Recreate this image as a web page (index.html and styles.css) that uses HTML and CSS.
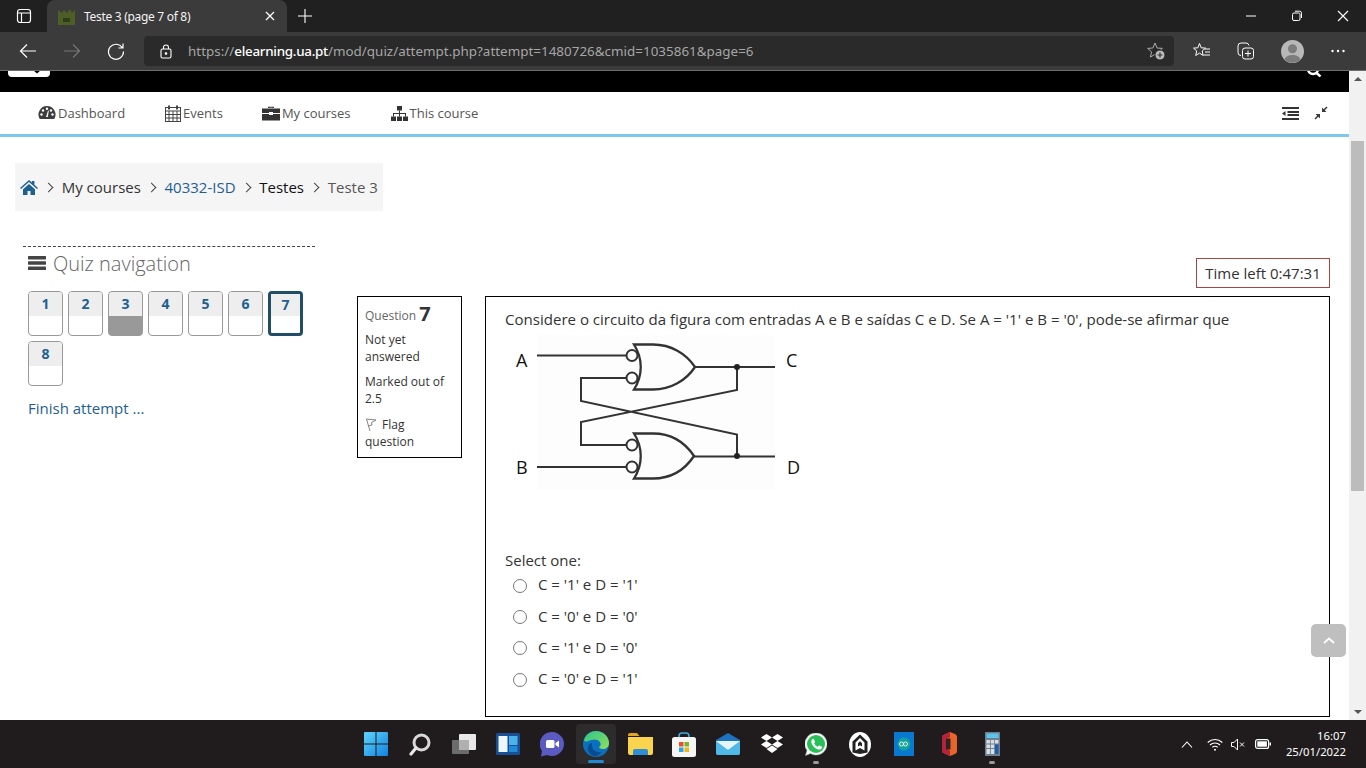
FILE: index.html
```html
<!DOCTYPE html>
<html lang="en">
<head>
<meta charset="utf-8">
<title>Teste 3 (page 7 of 8)</title>
<link rel="stylesheet" href="styles.css">
</head>
<body>
<div class="screen">
  <div class="tabbar">
    <svg class="tab-toggle" width="16" height="16" viewBox="0 0 16 16" fill="none" stroke="#fff" stroke-width="1.2"><rect x="1.5" y="1.5" width="13" height="13" rx="2.5"/><path d="M1.5 5h13M5.5 5v9.5"/></svg>
    <div class="tab">
      <svg class="favicon" width="17" height="17" viewBox="0 0 17 17"><path d="M0 2l4 3 2-3 3 3 3-4 2 4 3-3v15H0z" fill="#4d5f26"/><rect x="5" y="10" width="7" height="4" fill="#2f3c18"/></svg>
      <span class="tab-title">Teste 3 (page 7 of 8)</span>
      <svg class="tab-close" width="10" height="10" viewBox="0 0 10 10" stroke="#fff" stroke-width="1.3"><path d="M1 1l8 8M9 1l-8 8"/></svg>
    </div>
    <svg class="new-tab" width="16" height="16" viewBox="0 0 16 16" stroke="#fff" stroke-width="1.1"><path d="M8 1v14M1 8h14"/></svg>
    <div class="win-controls">
      <svg width="12" height="12" viewBox="0 0 12 12" stroke="#fff"><path d="M1 6h10"/></svg>
      <svg width="12" height="12" viewBox="0 0 12 12" stroke="#fff" fill="none"><rect x="1.5" y="3" width="7.5" height="7.5" rx="1.5"/><path d="M4 1.2h4.5a2 2 0 0 1 2 2V8"/></svg>
      <svg width="12" height="12" viewBox="0 0 12 12" stroke="#fff" stroke-width="1.1"><path d="M1 1l10 10M11 1L1 11"/></svg>
    </div>
  </div>

  <div class="toolbar">
    <svg class="tool tool-back" width="18" height="16" viewBox="0 0 18 16" fill="none" stroke="#fff" stroke-width="1.2"><path d="M17 8H1.5M8 1.5L1.5 8 8 14.5"/></svg>
    <svg class="tool tool-fwd" width="18" height="16" viewBox="0 0 18 16" fill="none" stroke="#777" stroke-width="1.2"><path d="M1 8h15.5M10 1.5L16.5 8 10 14.5"/></svg>
    <svg class="tool tool-reload" width="18" height="18" viewBox="0 0 18 18" fill="none" stroke="#fff" stroke-width="1.2"><path d="M15.5 6A7.5 7.5 0 1 0 16.5 9.5M16 1.5V6h-4.5"/></svg>
    <div class="urlbox">
      <svg class="lock" width="12" height="15" viewBox="0 0 12 15" fill="none" stroke="#fff" stroke-width="1.1"><rect x="1" y="5" width="10" height="9" rx="1.5"/><path d="M3.5 5V3.500a2.500 2.500 0 0 1 5 0V5"/><circle cx="6" cy="9.500" r=".8" fill="#fff"/></svg>
      <span class="url">https://<b>elearning.ua.pt</b>/mod/quiz/attempt.php?attempt=1480726&amp;cmid=1035861&amp;page=6</span>
      <svg class="star-add" width="18" height="18" viewBox="0 0 18 18" fill="none"><path d="M8 1l2.100 5 5.300.4-4 3.500 1.200 5.200L8 12.300l-4.600 2.800 1.200-5.200-4-3.500L5.900 6z" stroke="#aaa" stroke-width="1"/><circle cx="13" cy="13" r="5" fill="#bbb" stroke="#2a2a2a" stroke-width="1"/><path d="M13 10.500v5M10.500 13h5" stroke="#333" stroke-width="1.2"/></svg>
    </div>
    <svg class="tool tool-fav" width="18" height="18" viewBox="0 0 18 18" fill="none" stroke="#fff" stroke-width="1"><path d="M6.500 1.500l1.700 4.300 4.300.3-3.300 2.900 1 4.500-3.700-2.400-3.800 2.400 1-4.500L.5 6.100l4.300-.3z"/><path d="M12 7h5M12 10h5M10.500 13h6.500"/></svg>
    <svg class="tool tool-coll" width="18" height="18" viewBox="0 0 18 18" fill="none" stroke="#fff" stroke-width="1"><path d="M4 13.500A3 3 0 0 1 1 10.500V4a3 3 0 0 1 3-3h5a3 3 0 0 1 3 2.500"/><rect x="5.500" y="6" width="11" height="11" rx="2.500"/><path d="M11 8.500v6M8 11.500h6"/></svg>
    <svg class="tool tool-avatar" width="23" height="23" viewBox="0 0 23 23"><circle cx="11.500" cy="11.500" r="11.500" fill="#b8b8b8"/><circle cx="11.500" cy="8.800" r="4.500" fill="#7c7c7c"/><path d="M3.500 19.500c1.500-3.500 4.500-4.500 8-4.500s6.500 1 8 4.500a11.500 11.500 0 0 1-16 0z" fill="#7c7c7c"/></svg>
    <svg class="tool tool-more" width="14" height="4" viewBox="0 0 14 4" fill="#fff"><circle cx="1.500" cy="2" r="1.200"/><circle cx="7" cy="2" r="1.200"/><circle cx="12.500" cy="2" r="1.200"/></svg>
  </div>

  <div class="viewport">
    <div class="page">
      <header class="site-head">
        <svg class="site-logo" width="42" height="7" viewBox="0 0 42 7"><path d="M0 0h25l4 3.500L33 0h9v3a4 4 0 0 1-4 4H4a4 4 0 0 1-4-4z" fill="#fff"/></svg>
        <span class="site-name">de aveiro</span>
        <svg class="site-search" width="16" height="7" viewBox="0 0 16 7" fill="none" stroke="#fff" stroke-width="2.400"><circle cx="6" cy="-1" r="5"/><path d="M9.500 3l4 3.500"/></svg>
      </header>

      <nav class="nav">
        <a class="nav-item nav-dash"><svg width="18" height="16" viewBox="0 0 18 16" fill="#3d3d3d"><path d="M9 1a8.500 8.500 0 0 0-7.200 13h14.400A8.500 8.500 0 0 0 9 1z"/><g fill="#fff"><circle cx="5" cy="5.500" r="1.200"/><circle cx="9" cy="3.800" r="1.200"/><circle cx="13" cy="5.500" r="1.200"/><circle cx="3.500" cy="9.500" r="1.200"/><circle cx="14.500" cy="9.500" r="1.200"/><path d="M8 12l2-6.500.8.300-1 6.200z"/></g></svg>Dashboard</a>
        <a class="nav-item nav-events"><svg width="16" height="17" viewBox="0 0 16 17" fill="none" stroke="#444" stroke-width="1"><rect x=".5" y="2.500" width="15" height="14"/><path d="M.5 6h15M.5 9.500h15M.5 13h15M4 6v10.500M8 6v10.500M12 6v10.500"/><path d="M4 .5v4M12 .5v4" stroke-width="2"/></svg>Events</a>
        <a class="nav-item nav-courses"><svg width="18" height="15" viewBox="0 0 18 15" fill="#333"><path d="M6 2V.8h6V2h-1.300v-.2H7.300V2zM0 2.500h18V7h-7V6H7v1H0zM0 8h7v1h4V8h7v6.500H0z"/></svg>My courses</a>
        <a class="nav-item nav-this"><svg width="17" height="15" viewBox="0 0 17 15" fill="#333"><rect x="6" y="0" width="5" height="4.500"/><rect x="0" y="10.500" width="5" height="4.500"/><rect x="6" y="10.500" width="5" height="4.500"/><rect x="12" y="10.500" width="5" height="4.500"/><path d="M8 4.500h1v2.500h6v3.500h-1V8H9v2.500H8V8H3v2.500H2V7h6z"/></svg>This course</a>
        <span class="nav-spacer"></span>
        <svg class="nav-indent" width="17" height="13" viewBox="0 0 17 13" fill="#333"><rect width="17" height="2"/><rect x="5.500" y="4" width="11.500" height="2"/><rect x="5.500" y="7" width="11.500" height="2"/><rect y="11" width="17" height="2"/><path d="M3.500 4v5L0 6.500z"/></svg>
        <svg class="nav-shrink" width="14" height="14" viewBox="0 0 14 14" fill="#3a3a3a"><path d="M8 6V1.500l1.700 1.700L12.500.5l1 1-2.700 2.800L12.500 6zM6 8v4.500l-1.700-1.700L1.500 13.500l-1-1 2.700-2.800L1.500 8z"/></svg>
      </nav>

      <div class="content">
        <ol class="crumbs">
          <li class="crumb"><svg class="crumb-home" width="18" height="15" viewBox="0 0 18 15" fill="#1f6092"><path d="M9 0l3 2.600V1h2.400v3.700L18 8l-1 1-8-7-8 7-1-1zM3 9.300L9 4l6 5.300V15h-4.500v-4h-3v4H3z"/></svg></li>
          <li class="crumb crumb-sep">My courses</li>
          <li class="crumb crumb-sep"><a class="link">40332-ISD</a></li>
          <li class="crumb crumb-sep crumb-dark">Testes</li>
          <li class="crumb crumb-sep crumb-last">Teste 3</li>
        </ol>

        <div class="columns">
          <aside class="sidebar">
            <h2 class="block-title"><svg width="18" height="14" viewBox="0 0 18 14" fill="#444"><rect width="18" height="3.400" rx=".6"/><rect y="5.300" width="18" height="3.400" rx=".6"/><rect y="10.600" width="18" height="3.400" rx=".6"/></svg>Quiz navigation</h2>
            <div class="qn-grid">
              <a class="qn"><span class="qn-num">1</span></a>
              <a class="qn"><span class="qn-num">2</span></a>
              <a class="qn qn-flagged"><span class="qn-num">3</span></a>
              <a class="qn"><span class="qn-num">4</span></a>
              <a class="qn"><span class="qn-num">5</span></a>
              <a class="qn"><span class="qn-num">6</span></a>
              <a class="qn qn-current"><span class="qn-num">7</span></a>
              <a class="qn"><span class="qn-num">8</span></a>
            </div>
            <a class="link finish">Finish attempt ...</a>
          </aside>

          <section class="region">
            <div class="timer-row"><div class="timer">Time left 0:47:31</div></div>
            <div class="question">
              <div class="q-info">
                <h3 class="q-no">Question <b>7</b></h3>
                <p class="q-state">Not yet answered</p>
                <p class="q-grade">Marked out of 2.5</p>
                <p class="q-flag"><svg width="12" height="14" viewBox="0 0 12 14" fill="none" stroke="#666" stroke-width=".8"><path d="M1.500 1l3.500 12M1.500 1L11 2 6.500 4.500 7 7 3.500 8"/></svg>Flag question</p>
              </div>
              <div class="q-body">
                <p class="q-text">Considere o circuito da figura com entradas A e B e saídas C e D. Se A = '1' e B = '0', pode-se afirmar que</p>
                <svg class="figure" width="310" height="156" viewBox="505 335 310 156" fill="none" stroke="#333" stroke-width="2">
                  <rect x="537" y="335" width="238" height="155" fill="#fcfdfc" stroke="none"/>
                  <path d="M537 355.500h90M775 367h-80M537 467h90M775 456.500h-81"/>
                  <circle cx="632" cy="355.500" r="5.500"/><circle cx="632" cy="378" r="5.500"/>
                  <circle cx="632" cy="445" r="5.500"/><circle cx="632" cy="467" r="5.500"/>
                  <path d="M634 344.500h19c18 0 33 9 42 22.500-9 13.500-24 22.500-42 22.500h-19c9-14 9-31 0-45z" stroke-width="2.300"/>
                  <path d="M634 433.500h19c18 0 32 9 41 22.500-9 13.500-23 22.500-41 22.500h-19c9-14 9-31 0-45z" stroke-width="2.300"/>
                  <path d="M737 367v23L581 422v23h45.500M626.500 378H581v23l156 33.500V456.500"/>
                  <circle cx="737" cy="367" r="3" fill="#222" stroke="none"/>
                  <circle cx="737" cy="456" r="3" fill="#222" stroke="none"/>
                  <g class="fig-labels">
                    <text x="516" y="367">A</text><text x="786" y="367">C</text>
                    <text x="516" y="474">B</text><text x="787" y="474">D</text>
                  </g>
                </svg>
                <p class="prompt">Select one:</p>
                <div class="answers">
                  <label class="answer"><span class="radio"></span>C = '1' e D = '1'</label>
                  <label class="answer"><span class="radio"></span>C = '0' e D = '0'</label>
                  <label class="answer"><span class="radio"></span>C = '1' e D = '0'</label>
                  <label class="answer"><span class="radio"></span>C = '0' e D = '1'</label>
                </div>
              </div>
            </div>
          </section>
        </div>
      </div>
      <a class="to-top"><svg width="12" height="7" viewBox="0 0 12 7" fill="none" stroke="#fff" stroke-width="1.800"><path d="M1 6l5-4.500L11 6"/></svg></a>
    </div>
    <div class="scrollbar">
      <span class="sb-arrow sb-up"></span>
      <span class="sb-thumb"></span>
      <span class="sb-arrow sb-down"></span>
    </div>
  </div>

  <footer class="taskbar">
    <div class="task-icons">
      <span class="task"><svg width="24" height="24" viewBox="0 0 24 24"><defs><linearGradient id="win" x1="0" y1="0" x2="1" y2="1"><stop offset="0" stop-color="#5fd3fb"/><stop offset="1" stop-color="#1283e0"/></linearGradient></defs><path fill="url(#win)" d="M0 1a1 1 0 0 1 1-1h10.500v11.500H0zM12.500 0H23a1 1 0 0 1 1 1v10.500H12.500zM0 12.500h11.500V24H1a1 1 0 0 1-1-1zM12.500 12.500H24V23a1 1 0 0 1-1 1H12.500z"/></svg></span>
      <span class="task"><svg width="22" height="23" viewBox="0 0 22 23" fill="none"><circle cx="12.500" cy="9.500" r="7.500" stroke="#d8d8d8" stroke-width="3"/><path d="M7 15l-5 6" stroke="#e8e8e8" stroke-width="3.200" stroke-linecap="round"/></svg></span>
      <span class="task"><svg width="24" height="20" viewBox="0 0 24 20"><rect x="7" y="0" width="17" height="16" rx="1" fill="#e8e8e8"/><rect y="6" width="17" height="14" rx="1" fill="#6c6c6c"/><rect x="7" y="6" width="10" height="10" fill="#b0b0b0"/></svg></span>
      <span class="task"><svg width="24" height="22" viewBox="0 0 24 22"><rect width="24" height="22" rx="1.500" fill="#164f96"/><rect x="2.500" y="3" width="9" height="16" rx=".5" fill="#eef6fc"/><rect x="13" y="3" width="8.500" height="9" fill="#4cb3ea"/><rect x="13" y="13" width="8.500" height="6" fill="#1f8ad8"/></svg></span>
      <span class="task"><svg width="24" height="25" viewBox="0 0 24 25"><path d="M12 0a12 12 0 1 1-5 22.900L1 24.500l1-5.500A12 12 0 0 1 12 0z" fill="#5a5ac0"/><rect x="6" y="8" width="8.500" height="8" rx="1.500" fill="#fff"/><path d="M15.500 11l3.500-2.500v7L15.500 13z" fill="#fff"/></svg></span>
      <span class="task task-active"><svg width="26" height="26" viewBox="0 0 26 26"><defs><linearGradient id="edge" x1="0" y1="0" x2="1" y2="1"><stop offset="0" stop-color="#2dc48d"/><stop offset="1" stop-color="#8fe05a"/></linearGradient></defs><circle cx="13" cy="13" r="13" fill="#0c70c0"/><path d="M1 9C3 3 8 0 13 0c7 0 13 5 13 12 0 4-3 6-6 6-2 0-4-1-4-2 2-1 2-3 1-5-2-3-6-3-9-2-3 1-6 3-7 0z" fill="url(#edge)"/><path d="M9 14c0 4 3 7 7 7 1 0 2 0 3-.5-2 3-5 5.500-8 4.500-4-1-7-5-6-9 .5-2 2-4 4-4z" fill="#0a4d8f"/></svg><span class="active-bar"></span></span>
      <span class="task"><svg width="25" height="22" viewBox="0 0 25 22"><path d="M0 2a2 2 0 0 1 2-2h7l2.500 3H0z" fill="#e0a526"/><path d="M0 4h25v16a2 2 0 0 1-2 2H2a2 2 0 0 1-2-2z" fill="#fbd44e"/><path d="M5 22v-4a2 2 0 0 1 2-2h11a2 2 0 0 1 2 2v4z" fill="#2d8fd5"/></svg></span>
      <span class="task"><svg width="24" height="25" viewBox="0 0 24 25" fill="none"><path d="M7 6V4a3 3 0 0 1 3-3h4a3 3 0 0 1 3 3v2" stroke="#36a9e0" stroke-width="1.600"/><rect y="5" width="24" height="20" rx="2.500" fill="#f5f5f5"/><rect x="7" y="10" width="4.500" height="4.500" fill="#e5502c"/><rect x="12.500" y="10" width="4.500" height="4.500" fill="#7ab52c"/><rect x="7" y="15.500" width="4.500" height="4.500" fill="#2ca4e5"/><rect x="12.500" y="15.500" width="4.500" height="4.500" fill="#f4b41e"/></svg></span>
      <span class="task"><svg width="24" height="22" viewBox="0 0 24 22"><path d="M12 0l12 7v13a2 2 0 0 1-2 2H2a2 2 0 0 1-2-2V7z" fill="#1d72bd"/><path d="M0 8h24v5L12 17 0 13z" fill="#e6f5fc"/><path d="M0 8l12 9L24 8v12a2 2 0 0 1-2 2H2a2 2 0 0 1-2-2z" fill="#4fb8e8"/></svg></span>
      <span class="task"><svg width="22" height="20" viewBox="0 0 22 20" fill="#fff"><path d="M5.500 0L11 3.500 5.500 7 0 3.500zM16.500 0L22 3.500 16.500 7 11 3.500zM5.500 7L11 10.500 5.500 14 0 10.500zM16.500 7L22 10.500 16.500 14 11 10.500zM5.500 15L11 11.500l5.500 3.500L11 19z"/></svg></span>
      <span class="task"><svg width="22" height="23" viewBox="0 0 22 23"><path d="M11 0a11 11 0 1 1-5.500 20.500L.5 22.500l1.500-5A11 11 0 0 1 11 0z" fill="#fff" stroke="#9ad0a5" stroke-width=".5"/><circle cx="11" cy="11" r="9" fill="#29c058"/><path d="M7.500 6c-1 1-1.500 2-1 4 1 3 4 6 7 6.500 2 .3 3-.5 3.500-1.500.3-.8.200-1.200 0-1.300l-2.500-1.200c-.5-.2-.7 0-1 .4l-.7.800c-1.500-.5-3-2-3.700-3.500l.7-.8c.3-.4.300-.6.100-1L9 6.200C8.700 5.600 8 5.500 7.500 6z" fill="#fff"/></svg><span class="run-dot"></span></span>
      <span class="task"><svg width="22" height="25" viewBox="0 0 22 25"><ellipse cx="11" cy="12.500" rx="11" ry="12.500" fill="#fff"/><path d="M3.500 20.500V9.500L11 2.500l7.500 7v11L11 22z" fill="#222"/><path d="M6.500 18.500V10.500L11 6l4.500 4.500v8L11 16z" fill="#fff"/><path d="M9 14.500v-3.200l2-2 2 2v3.200l-2-1.300z" fill="#222"/></svg></span>
      <span class="task"><svg width="20" height="24" viewBox="0 0 20 24"><rect width="20" height="24" fill="#0a78d0"/><circle cx="10" cy="12" r="6.500" fill="#0fa39b"/><path d="M5.500 12a2 2 0 0 1 4 0 2 2 0 0 1 4 0 2 2 0 0 1-4 0 2 2 0 0 1-4 0z" fill="none" stroke="#fff" stroke-width=".9"/></svg></span>
      <span class="task"><svg width="17" height="24" viewBox="0 0 17 24"><path d="M2 5c0-1 .500-1.500 1.500-2L10 0l5 2c1 .5 2 1.500 2 3v14c0 1.500-1 2.500-2 3l-5 2-6.500-3C2.500 20.500 2 20 2 19z" fill="#e8642a"/><path d="M2 5c0-1 .500-1.500 1.500-2L10 0v5L6 7v9l4 3v5l-6.500-3C2.500 20.500 2 20 2 19z" fill="#b5233a"/><rect x="6" y="6.500" width="4.500" height="11" fill="#2a2424"/></svg></span>
      <span class="task"><svg width="15" height="24" viewBox="0 0 15 24"><rect width="15" height="24" fill="#6e7f8e"/><rect x="1.500" y="1.500" width="12" height="4.500" fill="#5fc3ec"/><g fill="#d8e0e6"><rect x="1.500" y="8" width="3.400" height="3.500"/><rect x="5.800" y="8" width="3.400" height="3.500"/><rect x="10" y="8" width="3.400" height="3.500"/><rect x="1.500" y="12.500" width="3.400" height="3.500"/><rect x="5.800" y="12.500" width="3.400" height="3.500"/><rect x="1.500" y="17" width="3.400" height="5"/><rect x="5.800" y="17" width="3.400" height="5"/></g><rect x="10" y="12.500" width="3.400" height="9.500" fill="#1c5fa8"/></svg><span class="run-dot"></span></span>
    </div>
    <div class="tray">
      <svg class="tray-chev" width="12" height="7" viewBox="0 0 12 7" fill="none" stroke="#fff" stroke-width="1.100"><path d="M1 6.500L6 1l5 5.500"/></svg>
      <svg class="tray-wifi" width="16" height="13" viewBox="0 0 16 13" fill="none" stroke="#fff" stroke-width="1.100"><path d="M.7 4.500a10.500 10.500 0 0 1 14.600 0M3 7a7.200 7.200 0 0 1 10 0M5.300 9.400a3.800 3.800 0 0 1 5.400 0"/><circle cx="8" cy="11.800" r="1" fill="#fff" stroke="none"/></svg>
      <svg class="tray-vol" width="15" height="13" viewBox="0 0 15 13" fill="none" stroke="#fff" stroke-width="1"><path d="M.5 4.500h2.500L6.500 1v11L3 8.500H.5zM9 4.500l4 4M13 4.500l-4 4"/></svg>
      <svg class="tray-batt" width="16" height="10" viewBox="0 0 16 10"><rect x=".6" y=".6" width="13" height="8.800" rx="2" fill="none" stroke="#fff" stroke-width="1.200"/><rect x="2.300" y="2.300" width="9.600" height="5.400" fill="#fff"/><rect x="14.500" y="3.500" width="1.500" height="3" fill="#fff"/></svg>
      <div class="clock"><span>16:07</span><span>25/01/2022</span></div>
    </div>
  </footer>
</div>
</body>
</html>
```
FILE: styles.css
```css
* { box-sizing: border-box; }
html, body { margin: 0; height: 100%; overflow: hidden; }
body { font-family: "Open Sans", "Noto Sans", sans-serif; color: #333; background: #fff; }
p, h2, h3, ol { margin: 0; padding: 0; font-weight: normal; }
svg { display: block; flex: none; }

.screen { width: 1366px; height: 768px; display: flex; flex-direction: column; overflow: hidden; }

/* browser chrome */
.tabbar { height: 32px; background: #202020; display: flex; align-items: center; flex: none; }
.tab-toggle { margin-left: 16px; }
.tab { width: 240px; height: 32px; margin-left: 15px; background: #3b3b3b; border-radius: 8px 8px 0 0; display: flex; align-items: center; padding: 0 12px 0 11px; }
.tab-title { margin-left: 9px; flex: 1; font: 12px "Noto Sans", sans-serif; color: #f2f2f2; letter-spacing: -.3px; }
.new-tab { margin-left: 10px; }
.win-controls { margin-left: auto; display: flex; gap: 34px; margin-right: 17px; }

.toolbar { height: 39px; background: #3b3b3b; display: flex; align-items: center; flex: none; border-bottom: 1px solid #6e6e6e; }
.tool-back { margin-left: 19px; }
.tool-fwd { margin-left: 26px; }
.tool-reload { margin-left: 26px; }
.urlbox { margin-left: 19px; width: 1030px; height: 30px; background: #2a2a2a; border-radius: 4px; display: flex; align-items: center; padding: 0 9px 0 16px; }
.url { margin: -1px 0 0 16px; flex: 1; font: 13.4px "Noto Sans", sans-serif; color: #a6a6a6; letter-spacing: .02px; white-space: nowrap; }
.url b { color: #fff; font-weight: 500; letter-spacing: -.28px; }
.tool-fav { margin-left: 19px; }
.tool-coll { margin-left: 26px; }
.tool-avatar { margin-left: 26px; }
.tool-more { margin-left: 27px; }

/* page viewport */
.viewport { flex: 1; display: flex; min-height: 0; }
.page { flex: 1; min-width: 0; position: relative; overflow: hidden; }

.site-head { height: 21px; background: #000; display: flex; align-items: flex-start; overflow: hidden; }
.site-logo { margin: -1px 0 0 8px; }
.site-name { margin: -12px 0 0 8px; font-size: 13px; line-height: 15px; color: #ccc; }
.site-search { margin: -1px 26px 0 auto; }

.nav { height: 45px; border-bottom: 3px solid #7dc8ee; display: flex; align-items: center; background: #fff; padding: 0 21px 0 38px; }
.nav-item { display: flex; align-items: center; gap: 2px; font-size: 13px; color: #555; }
.nav-events { margin-left: 40px; }
.nav-courses { margin-left: 39px; }
.nav-this { margin-left: 40px; }
.nav-spacer { flex: 1; }
.nav-shrink { margin-left: 15px; }

.content { padding: 26px 19px 0 15px; }
.crumbs { list-style: none; display: inline-flex; align-items: center; height: 48px; background: #f5f5f5; padding: 0 5px; font-size: 15px; color: #333; }
.crumb-sep::before { content: ""; display: inline-block; width: 6px; height: 6px; margin: 0 9.4px 2px 7.3px; border-top: 1.4px solid #444; border-right: 1.4px solid #444; transform: rotate(45deg); }
.crumb-dark { color: #111; }
.crumb-last { color: #555; }
.link { color: #1f6092; }

.columns { display: flex; margin-top: 35px; }
.sidebar { width: 292px; margin-left: 8px; flex: none; border-top: 1px dashed #444; }
.block-title { display: flex; align-items: center; gap: 7px; margin: 3px 0 0 5px; height: 26px; font-size: 20px; font-weight: 300; color: #666; }
.qn-grid { display: flex; flex-wrap: wrap; gap: 5px; margin: 15px 0 0 5px; }
.qn { width: 35px; height: 45px; border: 1px solid #999; border-radius: 4px; background: #fff; overflow: hidden; color: #1f6092; font-size: 14px; font-weight: 700; text-align: center; }
.qn-num { display: block; height: 24px; line-height: 24px; background: #eee; }
.qn-flagged { background: #999; border-color: #999; }
.qn-current { border: 3px solid #1f4e66; }
.qn-current .qn-num { height: 22px; line-height: 22px; }
.finish { display: block; margin: 12px 0 0 5px; font-size: 15px; line-height: 20px; }

.region { margin-left: 42px; width: 973px; flex: none; }
.timer-row { display: flex; justify-content: flex-end; margin-top: 12px; }
.timer { width: 134px; height: 30px; border: 1px solid #a94442; font-size: 15px; line-height: 29px; text-align: center; color: #333; }
.question { display: flex; gap: 23px; margin-top: 8px; align-items: flex-start; }
.q-info { width: 105px; flex: none; border: 1px solid #000; padding: 6px 7px 7px; font-size: 12px; line-height: 17px; color: #333; }
.q-no { font-size: 12px; line-height: 22px; color: #666; }
.q-no b { font-size: 20px; font-weight: 700; color: #333; vertical-align: -1px; }
.q-state { margin-top: 4px; }
.q-grade { margin-top: 8px; }
.q-flag { margin-top: 9px; }
.q-flag svg { display: inline-block; margin-right: 5px; vertical-align: -3px; }
.q-body { width: 845px; flex: none; height: 421px; border: 1px solid #000; padding: 13px 19px 0; font-size: 15px; color: #333; }
.q-text { line-height: 18px; font-size: 15.06px; }
.figure { margin-top: 7px; }
.fig-labels text { font: 18px "Open Sans", sans-serif; fill: #111; stroke: none; }
.prompt { margin-top: 59px; line-height: 20px; }
.answers { display: flex; flex-direction: column; gap: 11px; margin: 4px 0 0 8px; }
.answer { display: flex; align-items: center; gap: 11px; line-height: 20px; height: 20.4px; }
.radio { width: 14px; height: 14px; margin-top: 3px; border: 1px solid #777; border-radius: 50%; background: #fff; flex: none; }

.to-top { position: absolute; left: 1311px; top: 553px; width: 35px; height: 33px; background: #bfbfbf; border-radius: 5px; display: flex; align-items: center; justify-content: center; }

.scrollbar { width: 17px; flex: none; background: #f1f1f1; display: flex; flex-direction: column; align-items: center; position: relative; }
.sb-thumb { width: 13px; height: 350px; background: #bcbcbc; margin-top: 70px; }
.sb-arrow { position: absolute; width: 0; height: 0; border-left: 4px solid transparent; border-right: 4px solid transparent; }
.sb-up { top: 6px; border-bottom: 4px solid #555; }
.sb-down { bottom: 6px; border-top: 4px solid #555; }

/* taskbar */
.taskbar { height: 48px; flex: none; background: #201c1d; position: relative; display: flex; align-items: center; justify-content: flex-end; padding-right: 20px; }
.task-icons { position: absolute; left: 354px; top: 0; display: flex; height: 48px; }
.task { width: 44px; height: 48px; display: flex; align-items: center; justify-content: center; position: relative; }
.task-active::before { content: ""; position: absolute; left: 2px; right: 2px; top: 4px; bottom: 4px; background: #2e2b2d; border-radius: 4px; }
.task-active svg { position: relative; }
.active-bar { position: absolute; left: 14px; bottom: 5px; width: 16px; height: 3px; border-radius: 2px; background: #1f8ad8; }
.run-dot { position: absolute; left: 19px; bottom: 4px; width: 6px; height: 3px; border-radius: 2px; background: #999; }
.tray { display: flex; align-items: center; color: #fff; }
.tray-wifi { margin-left: 14px; }
.tray-vol { margin-left: 8px; }
.tray-batt { margin-left: 9px; }
.clock { margin-left: 15px; display: flex; flex-direction: column; align-items: flex-end; font: 11.3px/16px "Noto Sans", sans-serif; }
```
